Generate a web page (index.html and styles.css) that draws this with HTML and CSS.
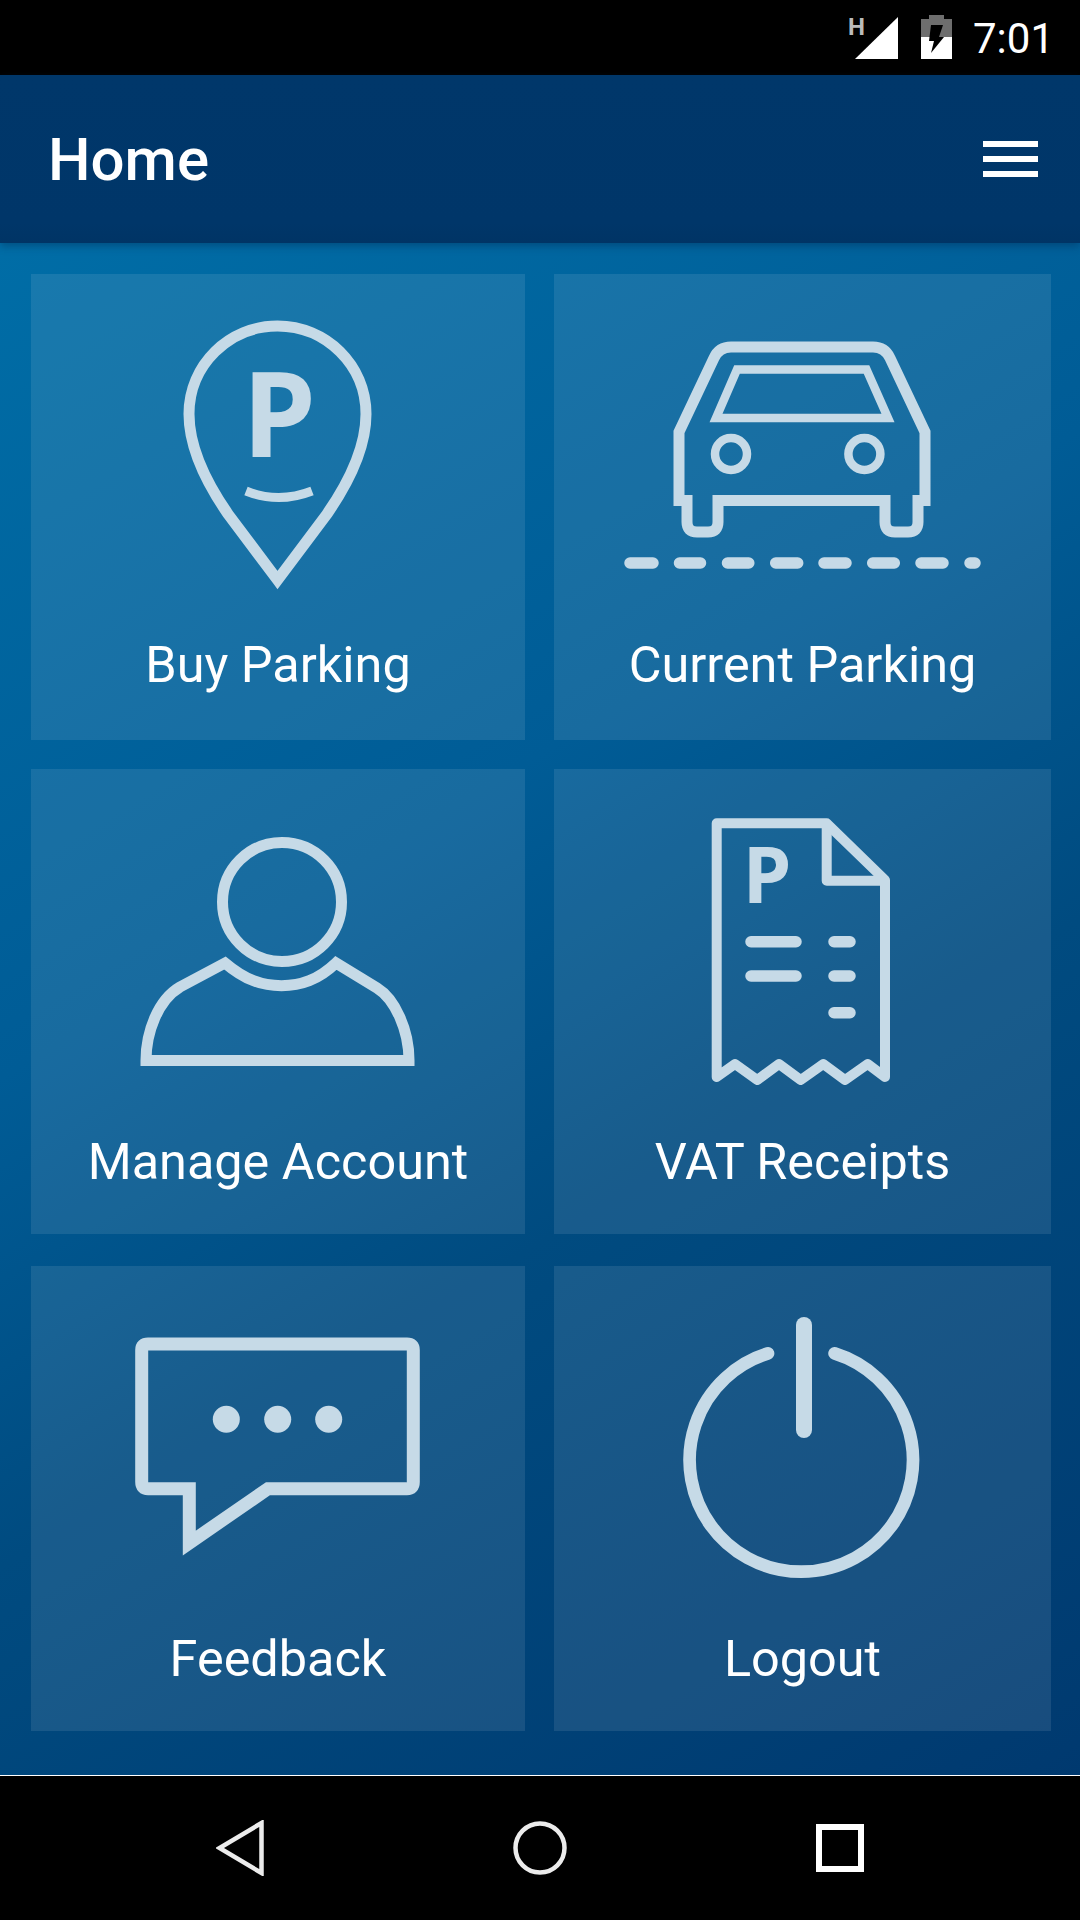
FILE: index.html
```html
<!DOCTYPE html>
<html lang="en">
<head>
<meta charset="utf-8">
<title>Home</title>
<link rel="stylesheet" href="styles.css">
</head>
<body>
<div class="screen">
  <div class="status">
    <span class="net">H</span>
    <svg class="signal" viewBox="856 17 43 42"><path d="M856 59 899 17V59Z" fill="#fff"/></svg>
    <svg class="battery" viewBox="922 15 31 44">
      <path d="M930 15H945V19H953V37H922V19H930Z" fill="#6e6e6e"/>
      <path d="M922 37H953V59H922Z" fill="#fff"/>
      <path d="M932 25H944L940 37H945L932 53 935 41H930Z" fill="#000"/>
    </svg>
    <span class="time">7:01</span>
  </div>
  <header class="appbar">
    <h1 class="title">Home</h1>
    <div class="menu"><span></span><span></span><span></span></div>
  </header>
  <main class="grid">
    <a class="tile">
      <svg class="art" viewBox="31 274 494 340">
        <path class="ln" d="M277.5 580 228 514C210 488 189 450 189 414 189 365 229 326 277.5 326 326 326 366 365 366 414 366 450 345 488 327 514Z"/>
        <text class="glyph" x="279" y="457" text-anchor="middle" font-size="118">P</text>
        <path class="ln thin" d="M246 491Q278.5 504 312 491"/>
      </svg>
      <span class="label">Buy Parking</span>
    </a>
    <a class="tile">
      <svg class="art" viewBox="554 274 497 340">
        <path class="ln" stroke-width="10" d="M718 500.5H885V522Q885 532 895 532H908Q918 532 918 522V500.5H925V432L890 358Q885 347 873 347H731Q719 347 714 358L679 432V500.5H687V522Q687 532 697 532H708Q718 532 718 522Z"/>
        <path class="ln w8" d="M737 369.5H866.5L888 418H716Z"/>
        <circle class="ln w8" cx="731" cy="454" r="16"/>
        <circle class="ln w8" cx="864.4" cy="454" r="16"/>
        <path class="ln road" d="M630 563H653M679.5 563H700.5M727.5 563H748.8M775.7 563H797.7M824 563H846M872.7 563H894.3M921 563H943M970 563H975"/>
      </svg>
      <span class="label">Current Parking</span>
    </a>
    <a class="tile">
      <svg class="art" viewBox="31 769 494 340">
        <circle class="ln" cx="282" cy="902" r="59.5"/>
        <path class="ln" d="M146 1060.5C146 1032 158 1000 180 987L225 963C245 980 262 985.7 281.5 985.7 301 985.7 318 980 336 963L377 988C395 999 409 1030 409 1060.5Z"/>
      </svg>
      <span class="label">Manage Account</span>
    </a>
    <a class="tile">
      <svg class="art" viewBox="554 769 497 340">
        <path class="ln round" d="M716.7 823.3H826.7L885 880V1077L867.7 1064 845 1080 823.3 1064 800.7 1080 779 1064 757.3 1080 735 1064 716.7 1077Z"/>
        <path class="ln round" d="M826.7 823.3V880.7H885"/>
        <text class="glyph" x="767" y="902.7" text-anchor="middle" font-size="78">P</text>
        <path class="ln road" d="M751 941.7H796M834 941.7H850M751 976H796M834 976H850M834 1012.7H850"/>
      </svg>
      <span class="label">VAT Receipts</span>
    </a>
    <a class="tile">
      <svg class="art" viewBox="31 1266 494 340">
        <path class="ln thick" d="M148 1344H407Q413.3 1344 413.3 1350V1482Q413.3 1488.7 407 1488.7H268L189.3 1543V1488.7H148Q141.7 1488.7 141.7 1482V1350Q141.7 1344 148 1344Z"/>
        <circle class="dot" cx="226.3" cy="1419.3" r="13.5"/>
        <circle class="dot" cx="277.7" cy="1419.3" r="13.5"/>
        <circle class="dot" cx="328.7" cy="1419.3" r="13.5"/>
      </svg>
      <span class="label">Feedback</span>
    </a>
    <a class="tile">
      <svg class="art" viewBox="554 1266 497 340">
        <path class="ln cap" d="M768 1353.4A111.7 111.7 0 1 0 834.6 1353.4"/>
        <path class="ln bar" d="M804 1325V1430"/>
      </svg>
      <span class="label">Logout</span>
    </a>
  </main>
  <footer class="nav">
    <svg class="navicon" width="48" height="56" viewBox="216 1820 48 56"><path class="navln" d="M261.5 1823V1873L219.5 1848Z"/></svg>
    <svg class="navicon" width="54" height="54" viewBox="0 0 54 54"><circle class="navln" cx="27" cy="27" r="24.5"/></svg>
    <svg class="navicon" width="48" height="48" viewBox="0 0 48 48"><path class="navln sq" d="M3 3H45V45H3Z"/></svg>
  </footer>
</div>
</body>
</html>
```
FILE: styles.css
```css
* { box-sizing: border-box; }
html, body { margin: 0; padding: 0; }
body { width: 1080px; height: 1920px; overflow: hidden; background: #000; font-family: Roboto, "Liberation Sans", sans-serif; color: #fff; }
.screen { width: 1080px; height: 1920px; display: flex; flex-direction: column; background: linear-gradient(149deg, #0072ab 0%, #005c96 42%, #004b80 61%, #003a70 93%, #00356b 100%); }

.status { height: 75px; background: #000; display: flex; align-items: flex-start; flex: none; padding: 0 26px 0 0; justify-content: flex-end; }
.net { font-size: 24px; line-height: 25px; font-weight: 700; color: #bbb; margin: 15px -10px 0 0; }
.signal { width: 43px; height: 42px; margin: 17px 23px 0 0; display: block; }
.battery { width: 31px; height: 44px; margin: 15px 21px 0 0; display: block; }
.time { font-size: 42px; line-height: 47px; margin-top: 15px; }

.appbar { height: 168px; flex: none; background: linear-gradient(180deg, #00376a 0%, #003669 88%, #003465 100%); display: flex; align-items: center; justify-content: space-between; padding: 0 42px 0 48px; box-shadow: 0 3px 8px rgba(0, 35, 75, .4); position: relative; }
.title { margin: 2px 0 0; font-size: 60px; font-weight: 500; line-height: 68px; }
.menu { width: 55px; display: flex; flex-direction: column; gap: 9px; margin-top: -1px; }
.menu span { display: block; height: 6px; background: #fff; }

.grid { flex: 1; display: grid; grid-template-columns: 494px 497px; grid-template-rows: 495px 497px 465px; column-gap: 29px; padding: 31px 0 0 31px; align-content: start; }
.tile { display: flex; flex-direction: column; align-items: center; height: 465px; background: rgba(255, 255, 255, .095); }
.tile:nth-child(-n+2) { height: 466px; }
.art { display: block; width: 100%; height: 340px; flex: none; filter: blur(.5px); }
.label { font-size: 50.4px; line-height: 56px; margin-top: 23px; white-space: nowrap; }
.tile:nth-child(n+3) .label { margin-top: 25px; }

.ln { fill: none; stroke: #c6dae7; stroke-width: 11; stroke-linejoin: miter; stroke-miterlimit: 10; }
.ln.thin { stroke-width: 9; }
.ln.w8 { stroke-width: 8.5; }
.ln.round { stroke-width: 10; stroke-linejoin: round; }
.ln.road { stroke-width: 11.5; stroke-linecap: round; }
.ln.thick { stroke-width: 13; }
.ln.cap { stroke-width: 12.7; stroke-linecap: round; }
.ln.bar { stroke-width: 16; stroke-linecap: round; }
.dot { fill: #c6dae7; }
.glyph { fill: #c6dae7; font-family: "Open Sans", sans-serif; font-weight: 700; }

.nav { height: 145px; flex: none; background: #000; border-top: 1px solid #fff; display: grid; grid-template-columns: repeat(3, 300px); padding: 0 90px; place-items: center; }
.navicon { display: block; }
.navln { fill: none; stroke: #ececec; stroke-width: 4.5; stroke-linejoin: miter; }
.navln.sq { stroke-width: 6; stroke: #fff; }
```
